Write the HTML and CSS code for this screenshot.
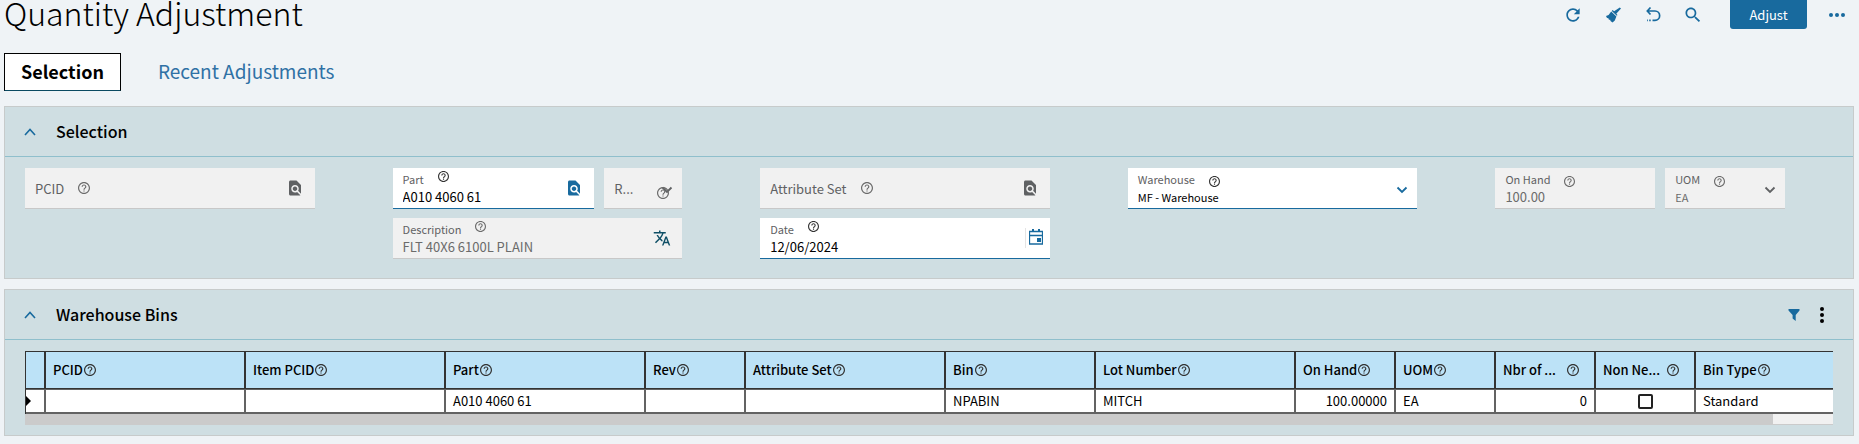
FILE: index.html
```html
<!DOCTYPE html>
<html lang="en">
<head>
    <meta charset="UTF-8">
    <meta name="viewport" content="width=device-width, initial-scale=1.0">
    <title>Quantity Adjustment</title>
    <link rel="stylesheet" href="styles.css">
</head>
<body>
    <!-- shared icons -->
    <svg class="sprite" aria-hidden="true">
        <symbol id="help" viewBox="2 2 20 20"><path d="M11 18h2v-2h-2v2zm1-16C6.48 2 2 6.48 2 12s4.48 10 10 10 10-4.48 10-10S17.52 2 12 2zm0 18c-4.41 0-8-3.59-8-8s3.59-8 8-8 8 3.59 8 8-3.59 8-8 8zm0-14c-2.21 0-4 1.79-4 4h2c0-1.1.9-2 2-2s2 .9 2 2c0 2-3 1.75-3 5h2c0-2.25 3-2.5 3-5 0-2.21-1.79-4-4-4z"/></symbol>
        <symbol id="lookup" viewBox="0 0 24 24"><path d="M20 19.59V8l-6-6H6c-1.1 0-1.99.9-1.99 2L4 20c0 1.1.89 2 1.99 2H18c.45 0 .85-.15 1.19-.4l-4.43-4.43c-.8.52-1.74.83-2.76.83-2.76 0-5-2.24-5-5s2.24-5 5-5 5 2.24 5 5c0 1.02-.31 1.96-.83 2.75L20 19.59zM9 13c0 1.66 1.34 3 3 3s3-1.34 3-3-1.34-3-3-3-3 1.34-3 3z"/></symbol>
        <symbol id="down" viewBox="0 0 12 8"><path d="M1.500 1.500l4.500 4.500 4.500-4.500" fill="none" stroke="currentColor" stroke-width="1.800"/></symbol>
        <symbol id="up" viewBox="0 0 12 8"><path d="M1 7l5-5.500 5 5.500" fill="none" stroke="currentColor" stroke-width="1.600"/></symbol>
    </svg>

    <header class="page-header">
        <h1>Quantity Adjustment</h1>
        <div class="toolbar">
            <button class="tool" aria-label="Refresh"><svg width="20" height="20" viewBox="0 0 24 24"><path d="M17.65 6.35C16.2 4.9 14.21 4 12 4c-4.42 0-7.99 3.58-7.99 8s3.57 8 7.99 8c3.73 0 6.84-2.55 7.73-6h-2.08c-.82 2.33-3.04 4-5.65 4-3.31 0-6-2.69-6-6s2.69-6 6-6c1.66 0 3.14.69 4.22 1.78L13 11h7V4l-2.350 2.350z"/></svg></button>
            <button class="tool" aria-label="Clear"><svg width="20" height="20" viewBox="0 0 20 20"><path d="M16.800 2.400l1.200 1-4.700 5.300 1.200 1.300-.7.800-5-4.900.8-.8 1.500 1.200zM8.200 6.500l5.200 5-1.600 3.900-2.300 2.200-2-1.500-.3-1.300-1.300-.1-.5-1.400-1.400-.3-1-2 2.600-1.100z"/></svg></button>
            <button class="tool" aria-label="Undo"><svg width="20" height="20" viewBox="0 0 20 20"><path d="M7.500 2.500L4.300 6l3.200 3.500M4.500 6H12a4.600 4.600 0 0 1 0 9.300H9.500M7.700 15.300H6.200M4.800 15.300H4" fill="none" stroke="currentColor" stroke-width="1.700"/></svg></button>
            <button class="tool" aria-label="Search"><svg width="20" height="20" viewBox="0 0 24 24"><path d="M15.500 14h-.79l-.28-.27C15.410 12.590 16 11.110 16 9.500 16 5.910 13.090 3 9.500 3S3 5.910 3 9.500 5.910 16 9.500 16c1.610 0 3.090-.59 4.230-1.570l.27.28v.79l5 4.990L20.490 19l-4.990-5zm-6 0C7.010 14 5 11.990 5 9.500S7.010 5 9.500 5 14 7.010 14 9.500 11.990 14 9.500 14z"/></svg></button>
            <button class="adjust">Adjust</button>
            <button class="tool" aria-label="More"><svg width="16" height="4" viewBox="0 0 16 4"><circle cx="2" cy="2" r="2"/><circle cx="8" cy="2" r="2"/><circle cx="14" cy="2" r="2"/></svg></button>
        </div>
    </header>

    <nav class="tabs">
        <a href="#selection" class="tab active">Selection</a>
        <a href="#recent" class="tab">Recent Adjustments</a>
    </nav>

    <section class="panel" id="selection">
        <div class="panel-header">
            <button class="collapse" aria-label="Collapse"><svg width="12" height="8"><use href="#up"/></svg></button>
            <h2>Selection</h2>
        </div>
        <div class="form-grid">
            <div class="field empty disabled">
                <div class="field-main">
                    <div class="label-row"><label for="pcid">PCID</label><svg class="help"><use href="#help"/></svg></div>
                    <input type="text" id="pcid" disabled>
                </div>
                <svg class="lookup"><use href="#lookup"/></svg>
            </div>

            <div class="stack">
                <div class="pair part-pair">
                    <div class="field">
                        <div class="field-main">
                            <div class="label-row"><label for="part">Part</label><svg class="help raised"><use href="#help"/></svg></div>
                            <input type="text" id="part" value="A010 4060 61">
                        </div>
                        <svg class="lookup"><use href="#lookup"/></svg>
                    </div>
                    <div class="field empty disabled rev">
                        <div class="field-main">
                            <div class="label-row"><label for="rev">R...</label></div>
                            <select id="rev" disabled><option></option></select>
                        </div>
                        <svg class="arrow"><use href="#down"/></svg>
                        <svg class="help rev-help"><use href="#help"/></svg>
                    </div>
                </div>
                <div class="field disabled">
                    <div class="field-main">
                        <div class="label-row"><label for="description">Description</label><svg class="help raised"><use href="#help"/></svg></div>
                        <input type="text" id="description" value="FLT 40X6 6100L PLAIN" disabled>
                    </div>
                    <svg class="translate" viewBox="0 0 24 24"><path d="M12.870 15.070l-2.540-2.510.03-.03c1.740-1.940 2.980-4.170 3.710-6.530H17V4h-7V2H8v2H1v1.990h11.170C11.500 7.920 10.440 9.750 9 11.350 8.070 10.320 7.300 9.190 6.690 8h-2c.73 1.630 1.730 3.170 2.980 4.560l-5.090 5.020L4 19l5-5 3.110 3.110.76-2.040zM18.500 10h-2L12 22h2l1.120-3h4.750L21 22h2l-4.500-12zm-2.620 7l1.620-4.330L19.120 17h-3.240z"/></svg>
                </div>
            </div>

            <div class="stack">
                <div class="field empty disabled">
                    <div class="field-main">
                        <div class="label-row"><label for="attribute-set">Attribute Set</label><svg class="help"><use href="#help"/></svg></div>
                        <input type="text" id="attribute-set" disabled>
                    </div>
                    <svg class="lookup"><use href="#lookup"/></svg>
                </div>
                <div class="field date">
                    <div class="field-main">
                        <div class="label-row"><label for="date">Date</label><svg class="help raised"><use href="#help"/></svg></div>
                        <input type="text" id="date" value="12/06/2024">
                    </div>
                    <button class="calendar" aria-label="Open calendar"><svg width="14" height="16" viewBox="0 0 14 16"><path d="M.5 2.500h13v12.500H.5zM0 6.500h14" fill="none" stroke="currentColor" stroke-width="1.300"/><path d="M3 0h2v3H3zM9 0h2v3H9zM8 9h4v4H8z"/></svg></button>
                </div>
            </div>

            <div class="field">
                <div class="field-main">
                    <div class="label-row"><label for="warehouse">Warehouse</label><svg class="help"><use href="#help"/></svg></div>
                    <select id="warehouse"><option>MF - Warehouse</option></select>
                </div>
                <svg class="arrow"><use href="#down"/></svg>
            </div>

            <div class="pair qty-pair">
                <div class="field disabled">
                    <div class="field-main">
                        <div class="label-row"><label for="on-hand">On Hand</label><svg class="help"><use href="#help"/></svg></div>
                        <input type="text" id="on-hand" value="100.00" disabled>
                    </div>
                </div>
                <div class="field disabled">
                    <div class="field-main">
                        <div class="label-row"><label for="uom">UOM</label><svg class="help"><use href="#help"/></svg></div>
                        <select id="uom" disabled><option>EA</option></select>
                    </div>
                    <svg class="arrow"><use href="#down"/></svg>
                </div>
            </div>
        </div>
    </section>

    <section class="panel">
        <div class="panel-header">
            <button class="collapse" aria-label="Collapse"><svg width="12" height="8"><use href="#up"/></svg></button>
            <h2>Warehouse Bins</h2>
            <div class="panel-tools">
                <button class="tool" aria-label="Filter"><svg width="12" height="12" viewBox="0 0 12 12"><path d="M.5 0h11v1.500L7.700 6v6L4.600 9.500V6L.5 1.500z"/></svg></button>
                <button class="tool kebab" aria-label="Grid menu"><svg width="4" height="16" viewBox="0 0 4 16"><circle cx="2" cy="2" r="2"/><circle cx="2" cy="8" r="2"/><circle cx="2" cy="14" r="2"/></svg></button>
            </div>
        </div>
        <div class="grid-area">
            <div class="grid-view">
                <table class="bins">
                    <colgroup>
                        <col class="w-mark"><col class="w-200"><col class="w-200"><col class="w-200"><col class="w-100"><col class="w-200"><col class="w-150"><col class="w-200"><col class="w-100"><col class="w-100"><col class="w-100"><col class="w-100"><col class="w-200">
                    </colgroup>
                    <thead>
                        <tr>
                            <th></th>
                            <th><div class="head"><span>PCID</span><svg class="help"><use href="#help"/></svg></div></th>
                            <th><div class="head"><span>Item PCID</span><svg class="help"><use href="#help"/></svg></div></th>
                            <th><div class="head"><span>Part</span><svg class="help"><use href="#help"/></svg></div></th>
                            <th><div class="head"><span>Rev</span><svg class="help"><use href="#help"/></svg></div></th>
                            <th><div class="head"><span>Attribute Set</span><svg class="help"><use href="#help"/></svg></div></th>
                            <th><div class="head"><span>Bin</span><svg class="help"><use href="#help"/></svg></div></th>
                            <th><div class="head"><span>Lot Number</span><svg class="help"><use href="#help"/></svg></div></th>
                            <th><div class="head"><span>On Hand</span><svg class="help"><use href="#help"/></svg></div></th>
                            <th><div class="head"><span>UOM</span><svg class="help"><use href="#help"/></svg></div></th>
                            <th><div class="head cut"><span>Nbr of ...</span><svg class="help"><use href="#help"/></svg></div></th>
                            <th><div class="head cut"><span>Non Ne...</span><svg class="help"><use href="#help"/></svg></div></th>
                            <th><div class="head"><span>Bin Type</span><svg class="help"><use href="#help"/></svg></div></th>
                        </tr>
                    </thead>
                    <tbody>
                        <tr>
                            <td class="mark"><svg width="5" height="10" viewBox="0 0 5 10"><path d="M0 0l5 5-5 5z"/></svg></td>
                            <td></td>
                            <td></td>
                            <td>A010 4060 61</td>
                            <td></td>
                            <td></td>
                            <td>NPABIN</td>
                            <td>MITCH</td>
                            <td class="num">100.00000</td>
                            <td>EA</td>
                            <td class="num">0</td>
                            <td class="check"><input type="checkbox" aria-label="Non Nettable"></td>
                            <td>Standard</td>
                        </tr>
                    </tbody>
                </table>
            </div>
            <div class="scroll-track"><div class="scroll-thumb"></div></div>
        </div>
    </section>
</body>
</html>
```
FILE: styles.css
```css
* {
    box-sizing: border-box;
}

body {
    margin: 0;
    padding: 0 5px 0 4px;
    background-color: #eff3f6;
    color: #000;
    font-family: "Noto Sans CJK SC", "Noto Sans", sans-serif;
    font-size: 12px;
}

svg {
    display: block;
    flex: none;
    fill: currentColor;
}

button {
    padding: 0;
    border: none;
    background: none;
    color: inherit;
    font-family: inherit;
    cursor: pointer;
}

.sprite {
    position: absolute;
    width: 0;
    height: 0;
}

/* header */
.page-header {
    display: flex;
    justify-content: space-between;
    height: 29px;
}

h1 {
    margin: 0;
    font-size: 32px;
    font-weight: 300;
    line-height: 24px;
}

.toolbar {
    display: flex;
    align-items: center;
    gap: 20px;
    padding-right: 9px;
    color: #186a9e;
}

.tool {
    display: flex;
    align-items: center;
    justify-content: center;
    color: #186a9e;
}

.adjust {
    width: 77px;
    height: 29px;
    margin: 0 2px 0 7px;
    border-radius: 0 0 3px 3px;
    background-color: #186a9e;
    color: #fff;
    font-size: 13px;
}

/* tabs */
.tabs {
    display: flex;
    gap: 20px;
    margin: 24px 0 15px;
}

.tab {
    padding: 0 16px 2px;
    border: 1px solid transparent;
    color: #2f71a5;
    font-size: 19px;
    line-height: 34px;
    text-decoration: none;
}

.tab.active {
    border-color: #000;
    border-bottom-color: #0b4a61;
    background-color: #fff;
    color: #000;
    font-size: 18px;
    font-weight: 700;
}

/* panels */
.panel {
    margin-bottom: 10px;
    border: 1px solid #c7cbcb;
    background-color: #cfdee2;
}

.panel-header {
    display: flex;
    align-items: center;
    height: 50px;
    padding: 0 24px 0 19px;
    border-bottom: 1px solid #8fbfcc;
}

.collapse {
    margin-right: 20px;
    color: #186a9e;
}

h2 {
    margin: 0;
    padding-bottom: 2px;
    font-size: 16px;
    font-weight: 500;
    line-height: 24px;
}

.panel-tools {
    display: flex;
    align-items: center;
    gap: 20px;
    margin-left: auto;
    padding-right: 5px;
}

.kebab {
    color: #000;
}

/* selection form */
.form-grid {
    display: grid;
    grid-template-columns: repeat(5, 1fr);
    align-items: start;
    gap: 78px;
    padding: 11px 68px 19px 20px;
}

.stack {
    display: grid;
    gap: 9px;
}

.pair {
    display: grid;
    gap: 10px;
}

.part-pair {
    grid-template-columns: 202fr 78fr;
}

.qty-pair {
    grid-template-columns: 4fr 3fr;
}

.field {
    display: flex;
    align-items: center;
    position: relative;
    height: 41px;
    padding: 0 14px 0 10px;
    border-bottom: 1px solid #186a9e;
    background-color: #fff;
    color: #186a9e;
}

.field-main {
    flex: 1;
    min-width: 0;
}

.label-row {
    display: flex;
    align-items: center;
    gap: 14px;
    height: 18px;
    color: #5f6163;
    font-size: 11px;
}

.label-row label {
    margin-bottom: 2px;
    line-height: 16px;
}

.help {
    width: 11px;
    height: 11px;
    color: #333;
}

.label-row .help {
    margin-top: 3px;
}

.label-row .raised {
    margin: 0 0 7px;
}

.field input,
.field select {
    display: block;
    width: 100%;
    height: 16px;
    padding: 0;
    border: none;
    outline: none;
    appearance: none;
    background: transparent;
    color: #000;
    font-family: inherit;
    font-size: 13px;
    line-height: 16px;
    opacity: 1;
}

.field select {
    font-size: 11px;
}

.lookup {
    width: 18px;
    height: 18px;
    margin-right: -3px;
}

.arrow {
    width: 12px;
    height: 8px;
    margin: 4px -5px 0 0;
}

.translate {
    width: 18px;
    height: 18px;
    margin-right: -3px;
    color: #0f4f66;
}

.field.disabled {
    border-bottom-color: #c8c8c8;
    background-color: #f1f1f1;
    color: #5f6163;
}

.disabled .help,
.disabled input,
.disabled select {
    color: #6b6b6b;
}

.empty .field-main {
    display: flex;
    align-items: center;
    padding-top: 4px;
}

.empty label {
    font-size: 13px;
    white-space: nowrap;
}

.empty .help {
    width: 12px;
    height: 12px;
    margin: 0 0 4px;
}

/* help icon sits over the drop-down arrow in the narrow box */
.empty .rev-help {
    position: absolute;
    right: 13px;
    top: 19px;
    margin: 0;
}

.date {
    padding-right: 7px;
}

.calendar {
    padding: 1px 0 3px 3px;
    border-left: 1px solid #e4e4e4;
    color: #186a9e;
}

/* warehouse bins grid */
.grid-area {
    padding: 11px 20px 10px;
}

.grid-view {
    overflow: hidden;
}

.bins {
    width: 1871px;
    table-layout: fixed;
    border-collapse: separate;
    border-spacing: 0;
    border-left: 1px solid #333;
}

.w-mark {
    width: 20px;
}

.w-100 {
    width: 100px;
}

.w-150 {
    width: 150px;
}

.w-200 {
    width: 200px;
}

.bins th {
    height: 38px;
    padding: 0 15px 0 7px;
    border: solid #333;
    border-width: 1px 2px 1px 0;
    background-color: #bce2f7;
    font-size: 13px;
    font-weight: 500;
    text-align: left;
}

.bins td {
    height: 25px;
    padding: 0 7px;
    border: solid #636363;
    border-width: 1px 2px 2px 0;
    background-color: #fff;
    font-size: 13px;
    line-height: 20px;
}

.head {
    display: flex;
    align-items: center;
    gap: 1px;
    line-height: 20px;
    white-space: nowrap;
}

.head .help {
    width: 12px;
    height: 12px;
}

.cut {
    justify-content: space-between;
}

.bins .mark {
    padding: 0;
}

.bins .num {
    text-align: right;
}

.check input {
    display: block;
    width: 15px;
    height: 15px;
    margin: 0 auto;
    appearance: none;
    border: 2px solid #222;
    border-radius: 2px;
    background-color: #fff;
}

.scroll-track {
    height: 11px;
    border-bottom: 1px solid #cbcbcb;
    background-color: #f1f1f1;
}

.scroll-thumb {
    width: 96.7%;
    height: 11px;
    background-color: #cbcbcb;
}
```
